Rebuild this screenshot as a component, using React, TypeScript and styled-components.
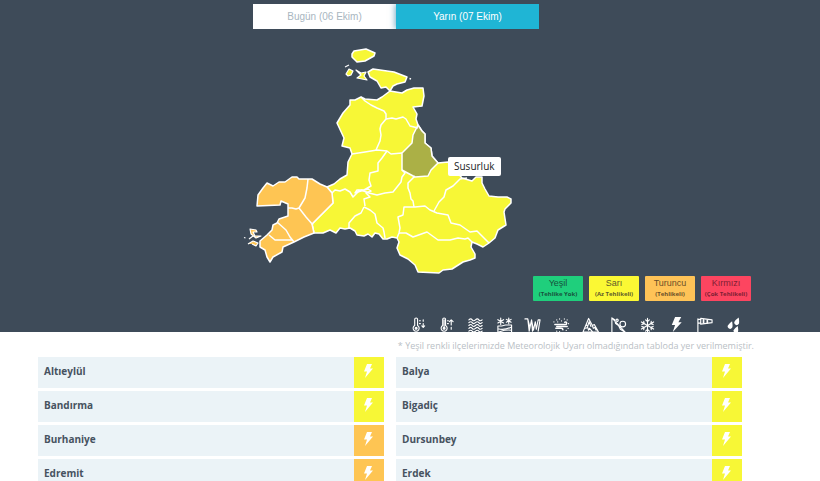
import React, { useState } from "react";
import styled, { createGlobalStyle } from "styled-components";

const YELLOW = "#f7f736";
const ORANGE = "#fec553";

const GlobalStyle = createGlobalStyle`
  * { box-sizing: border-box; }
  body {
    margin: 0;
    background: #fff;
    font-family: "Open Sans", sans-serif;
    color: #46525f;
  }
`;

const Hero = styled.header`
  background: #3e4b59;
  padding: 4px 66px 0 38px;
  display: flex;
  flex-direction: column;
`;

const Tabs = styled.div`
  display: flex;
  align-self: center;
  width: 286px;
`;

const Tab = styled.button<{ $active: boolean }>`
  flex: 1;
  height: 25px;
  border: 0;
  padding: 0;
  cursor: pointer;
  font: 10px "Liberation Sans", Arial, sans-serif;
  color: ${(p) => (p.$active ? "#fff" : "#a9b6bf")};
  background: ${(p) => (p.$active ? "#1fb5d5" : "#fff")};
  box-shadow: ${(p) => (p.$active ? "-1px 0 6px rgba(31, 120, 160, 0.6)" : "none")};
  clip-path: inset(0 0 0 -10px);
`;

const MapBox = styled.div`
  position: relative;
  align-self: center;
  width: 312px;
  margin-top: 15px;
`;

const MapSvg = styled.svg`
  display: block;
  width: 100%;
`;

const Tooltip = styled.div`
  position: absolute;
  left: 208px;
  top: 113px;
  padding: 0 6px;
  border-radius: 2px;
  background: #fff;
  color: #222;
  font-size: 10px;
  line-height: 19px;
`;

const Legend = styled.ul`
  list-style: none;
  margin: 2px 3px 0 0;
  padding: 0;
  display: flex;
  justify-content: flex-end;
  gap: 6px;
`;

const Level = styled.li<{ $bg: string; $fg: string }>`
  width: 50px;
  height: 25px;
  padding-top: 1px;
  border-radius: 1px;
  background: ${(p) => p.$bg};
  color: ${(p) => p.$fg};
  text-align: center;
  font-family: "Liberation Sans", Arial, sans-serif;
  font-size: 9px;
  line-height: 13px;
  white-space: nowrap;
`;

const LevelNote = styled.strong`
  display: block;
  font-family: "Open Sans", sans-serif;
  font-size: 6px;
  line-height: 9px;
`;

const Hazards = styled.ul`
  list-style: none;
  align-self: flex-end;
  margin: 16px 6px 0 0;
  padding: 0;
  width: 344px;
  height: 15px;
  overflow: hidden;
  display: grid;
  grid-template-columns: repeat(12, 1fr);
  justify-items: center;
`;

const HazardSvg = styled.svg`
  display: block;
  width: 17px;
  height: 17px;
  fill: none;
  stroke: #fff;
  stroke-width: 1.2;
  stroke-linecap: round;
  stroke-linejoin: round;
`;

const Main = styled.main`
  padding: 0 66px 0 38px;
`;

const Remark = styled.p`
  margin: 0;
  padding: 7px 0 4px;
  color: #b9c0c5;
  font-size: 9px;
  line-height: 14px;
  text-align: right;
`;

const Districts = styled.ul`
  list-style: none;
  margin: 0 12px 0 0;
  padding: 0;
  display: grid;
  grid-template-columns: 1fr 1fr;
  gap: 3px 12px;
`;

const District = styled.li`
  display: flex;
  height: 31px;
  padding-left: 6px;
  background: #ebf3f7;
  font-size: 10px;
  font-weight: 700;
  line-height: 29px;
`;

const Warning = styled.span<{ $color: string }>`
  margin-left: auto;
  width: 30px;
  height: 100%;
  display: flex;
  justify-content: center;
  align-items: center;
  padding: 0 2px 3px 0;
  background: ${(p) => p.$color};
`;

const BoltSvg = styled.svg`
  width: 10px;
  height: 14px;
  fill: #fff;
`;

const levels = [
  { name: "Yeşil", note: "(Tehlike Yok)", bg: "#1fcf7c", fg: "#17523c" },
  { name: "Sarı", note: "(Az Tehlikeli)", bg: "#fbf834", fg: "#615b2a" },
  { name: "Turuncu", note: "(Tehlikeli)", bg: "#fec357", fg: "#6b4f29" },
  { name: "Kırmızı", note: "(Çok Tehlikeli)", bg: "#fd4560", fg: "#7d2034" },
];

const districts = [
  ["Altıeylül", YELLOW],
  ["Balya", YELLOW],
  ["Bandırma", YELLOW],
  ["Bigadiç", YELLOW],
  ["Burhaniye", ORANGE],
  ["Dursunbey", YELLOW],
  ["Edremit", ORANGE],
  ["Erdek", YELLOW],
];

const borders = [
  "M361 97L365 101L371 105L377 108L384 111L386 114L386 119L381 125L380 129L381 135L380 141L376 150",
  "M386 119L392 118L396 119L403 117L406 119L410 126L418 128",
  "M352 154L365 152L377 150L387 151L391 154L402 153",
  "M387 151L382 158L378 163L378 171L370 173L369 180L371 186L364 190L357 190L355 193L361 191L368 189L371 191L366 193L370 197L364 199L365 206",
  "M402 170L405 173L402 177L401 182L397 187L393 192L385 193L377 195L369 193L361 190",
  "M415 176L408 183L408 188L410 193L411 199L413 201L414 207",
  "M332 193L335 190L340 191L345 189L350 192L353 197L357 193L359 190",
  "M364 207L361 213L355 216L349 223L349 228",
  "M364 207L370 210L375 214L377 223L383 228L384 232L385 238",
  "M397 238L399 233L400 228L398 217L403 215L404 207L415 207L425 206L430 210L437 213L448 215L451 223L460 225L470 232L477 231L483 237L489 243",
  "M399 233L406 233L413 237L427 232L438 240L450 240L458 238L465 239L468 238L472 242",
  "M434 211L439 202L444 197L446 190L453 186L457 182L460 179L467 178",
];

function WarningMap() {
  return (
    <MapSvg viewBox="240 44 312 230" role="img" aria-label="Balıkesir">
      <g stroke="#fff" strokeWidth="1.5" strokeLinejoin="round" fill={YELLOW}>
        <path d="M350 100L355 100L361 97L365 99L377 100L382 97L390 91L396 92L402 93L407 90L414 88L423 88L424 96L422 106L413 107L417 114L416 119L418 125L422 131L425 134L425 143L431 148L432 156L438 163L448 162L452 166L462 178L472 181L476 177L482 177L482 183L485 189L489 196L498 197L507 197L511 199L511 203L505 209L504 212L506 225L498 230L495 238L489 243L483 247L477 244L472 242L471 247L475 254L475 258L470 260L463 262L452 269L443 270L439 273L418 272L415 265L408 259L400 255L397 248L399 242L397 238L392 237L387 239L383 239L379 234L375 233L372 237L368 234L364 236L357 235L355 231L350 228L345 229L340 228L336 233L330 230L323 233L314 233L312 224L323 213L333 203L332 193L327 187L334 184L340 179L347 175L348 162L352 154L350 148L342 146L344 138L337 123L343 113L350 105Z" />
        <path d="M352 54L354 51L360 50L366 49L375 53L374 56L365 61L357 62L352 57Z" />
        <path strokeWidth="1.2" d="M345 67L349 65M349 69L353 71L351 75L348 76L346 74ZM356 70L361 73L366 72L364 76L367 80L362 79L357 78L361 75Z" />
        <path d="M368 72L373 69L380 70L394 72L407 77L405 82L397 84L393 86L390 91L386 87L381 88L377 81L370 77Z" />
        <path d="M409.5 78.5L411 79" />
        <path d="M418 125L422 131L425 134L425 143L431 148L432 156L438 163L431 170L428 176L415 177L402 170L402 153L412 143L413 135Z" fill="#abb046" />
        <g fill="none">{borders.map((d) => <path key={d} d={d} />)}</g>
      </g>
      <g stroke="#fff" strokeWidth="1.5" strokeLinejoin="round" fill={ORANGE}>
        <path d="M267 183L273 186L279 182L285 182L292 177L297 177L299 179L312 179L320 184L327 187L332 193L333 203L323 213L312 224L314 233L304 237L294 242L283 247L282 252L273 257L270 262L267 257L265 250L260 247L260 241L267 235L272 230L273 225L277 223L279 219L288 216L288 204L281 201L280 205L257 206L258 195L263 188Z" />
        <path fill="none" d="M308 179L307 188L305 198L299 208L296 209L292 208L288 208M299 208L306 217L313 225M277 222L286 230L290 237L294 242M269 235L275 240L292 240" />
        <path strokeWidth="1.200" d="M250 229L256 230L257 232L253 232L255 236L261 236L256 238L251 234ZM249 239L253 236M248 244L253 241L258 243L256 246L252 244M244 237.500L245.500 238" />
      </g>
    </MapSvg>
  );
}

const flake = "M9 1.500V16.500M2.500 5.200L15.500 12.800M15.500 5.200L2.500 12.800M7 3L9 5L11 3M7 15L9 13L11 15M3 8L5.500 7L5 4.500M15 10L12.500 11L13 13.500M13 4.500L12.500 7L15 8M5 13.500L5.500 11L3 10";
const hazards: { name: string; icon: React.ReactNode }[] = [
  { name: "Soğuk", icon: <><path d="M5 9V2.500a1.500 1.500 0 0 1 3 0v6.500a3.200 3.200 0 1 1-3 0zM10 4h1M10 7h1M14 3v1.500M14 7v4M12.500 9.500l1.500 1.500 1.500-1.500" /><circle cx="6.500" cy="12" r="1" fill="#fff" /></> },
  { name: "Sıcak", icon: <><path d="M5 9V2.500a1.500 1.500 0 0 1 3 0v6.500a3.200 3.200 0 1 1-3 0zM6.500 3v8M10 4h1M10 7h1M14 13v-2M14 8.500V3M12 5l2-2 2 2" /><circle cx="6.500" cy="12" r="1" fill="#fff" /></> },
  { name: "Sis", icon: <path d="M2 3q2-2 3.500 0t3.500 0 3.500 0 3.500 0M2 6q2-2 3.500 0t3.500 0 3.500 0 3.500 0M2 9q2-2 3.500 0t3.500 0 3.500 0 3.500 0M2 12q2-2 3.500 0t3.500 0 3.500 0 3.500 0M2 15q2-2 3.500 0t3.500 0 3.500 0 3.500 0" /> },
  { name: "Buzlanma", icon: <path d="M5 1v7M2 2.800l6 3.500M8 2.800L2 6.300M13.500 1v6M11 2.500l5 3M16 2.500l-5 3M2 9.500h4l4-1h6.500V17H2zM2 12.500q7 2 14.500-2M3 16q7-3 13.500-2" /> },
  { name: "Don", icon: <path d="M1 2h3l1.500 13L8 3l2 11 2-9 1 8 2-10h2l-2 12M8 3l1 12M4 2l2 8" /> },
  { name: "Toz", icon: <><path strokeWidth="1.600" d="M2 8h10.500q2 0 2-1.500T12.500 5.500M4 10h11M3 12h5.500q2 0 2 1.500" /><path d="M4 3v.2M7 2v.2M9 4v.2M12 2v.2M15 3v.2M5 5v.2M16.500 7v.2M16 12v.2M14 14v.2M4 15v.2M7 15.500v.2M1 5v.2" /></> },
  { name: "Çığ", icon: <path d="M1 16L7 1.500L11 9l2-1 4.500 8zM4.500 8l1.500 2L7.500 5l2 5M4 12l2-1 1 3 1-2 3 3.500M11 9l1 3 1.500-1 1.500 3" /> },
  { name: "Heyelan", icon: <><path d="M2 1v15.500h14.500zM2 1l3 2 1 4 3 2 2 4 5.500 3.500" /><circle cx="13.500" cy="7.500" r="3" /><circle cx="7.500" cy="3.500" r="1.200" /></> },
  { name: "Kar", icon: <path d={flake} /> },
  { name: "Gök gürültülü sağanak yağış", icon: <path stroke="none" fill="#fff" d="M7.500 0h6.500l-3 5.500h3.500L5 16l2.500-7.500H4z" /> },
  { name: "Rüzgar", icon: <><path d="M2 2v15M2 2.500h3M2 6.500h3M5 1.500l12 1.500v3L5 7.500z" /><path strokeWidth="1.800" d="M8 3v3M12 3.500v2.500" /></> },
  { name: "Yağmur", icon: <path stroke="none" fill="#fff" d="M14.500 0.500q1 5.500 0 7a2.600 2.600 0 0 1-4.500-2.500Q11 3 14.500 0.500zM7.500 4.500q1 5.500 0 7A2.600 2.600 0 0 1 3 9Q4 7 7.500 4.500zM13.500 9.500q1 5.500 0 6.500a2.600 2.600 0 0 1-4.500-2Q10 12 13.500 9.500z" /> },
];

export default function App() {
  const [day, setDay] = useState(1);
  return (
    <>
      <GlobalStyle />
      <Hero>
        <Tabs>
          {["Bugün (06 Ekim)", "Yarın (07 Ekim)"].map((label, i) => (
            <Tab key={label} type="button" $active={day === i} aria-pressed={day === i} onClick={() => setDay(i)}>
              {label}
            </Tab>
          ))}
        </Tabs>
        <MapBox>
          <WarningMap />
          <Tooltip role="tooltip">Susurluk</Tooltip>
        </MapBox>
        <Legend>
          {levels.map((l) => (
            <Level key={l.name} $bg={l.bg} $fg={l.fg}>
              {l.name}
              <LevelNote>{l.note}</LevelNote>
            </Level>
          ))}
        </Legend>
        <Hazards>
          {hazards.map((h) => (
            <li key={h.name}>
              <HazardSvg viewBox="0 0 18 18" role="img" aria-label={h.name}>{h.icon}</HazardSvg>
            </li>
          ))}
        </Hazards>
      </Hero>
      <Main>
        <Remark>* Yeşil renkli ilçelerimizde Meteorolojik Uyarı olmadığından tabloda yer verilmemiştir.</Remark>
        <Districts>
          {districts.map(([name, color]) => (
            <District key={name}>
              {name}
              <Warning $color={color}>
                <BoltSvg viewBox="0 0 10 14" aria-hidden="true">
                  <path d="M4 0h5L7 4.500h3L2 14l2-6.500H1z" />
                </BoltSvg>
              </Warning>
            </District>
          ))}
        </Districts>
      </Main>
    </>
  );
}
